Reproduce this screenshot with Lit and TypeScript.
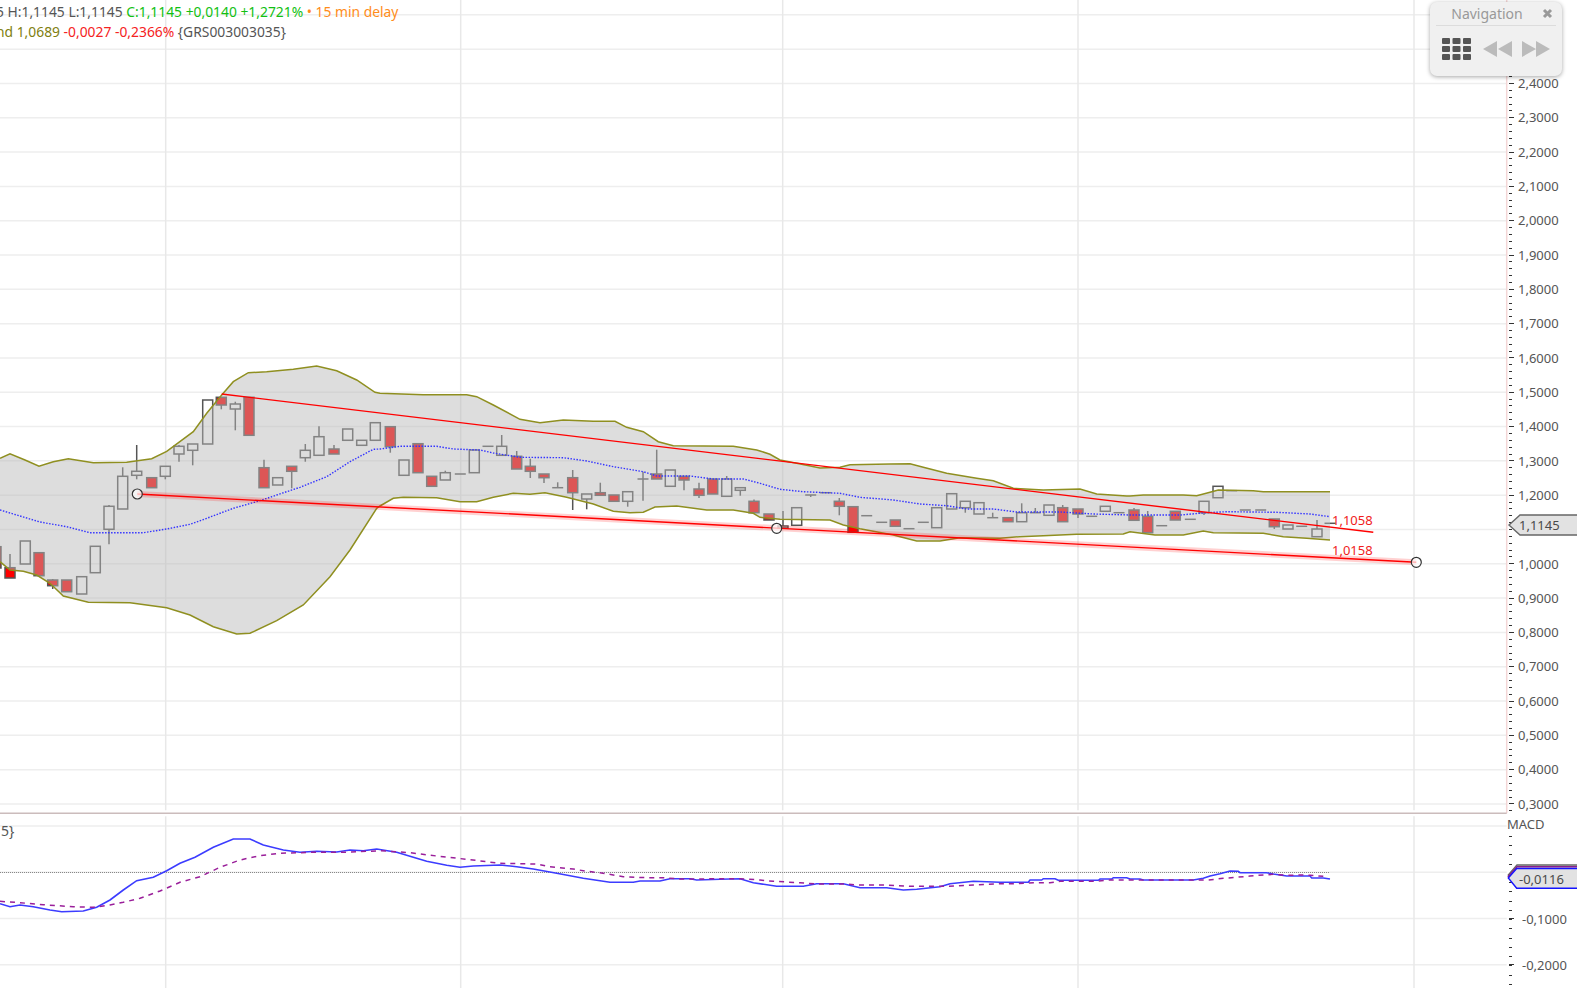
import { LitElement, html, svg, css } from "lit";
import { customElement } from "lit/decorators.js";

// price / macd scales, read off the axis
const py = (p: number) => 563.8 - (p - 1) * 343.1;
const my = (m: number) => 872.3 - m * 462;
const fmt = (v: number) => v.toFixed(4).replace(".", ",");

const GRID_X = [165.7, 460.7, 782.7, 1078, 1414];
const AXIS_X = 1506.7;
const SEP_Y = 813.3;

// points were read from 3x crops: ox,oy is the crop origin
type Pt = [number, number];
const crop = (ox: number, oy: number, s: string): Pt[] =>
  s.split(" ").map((p) => {
    const [x, y] = p.split(",").map(Number);
    return [ox + x / 3, oy + y / 3] as Pt;
  });
const line = (p: Pt[]) => p.map(([x, y]) => `${x.toFixed(1)},${y.toFixed(1)}`).join(" ");

const UPPER = [
  ...crop(0, 350, "0,325 30,311 75,330 117,349 160,335 205,326 280,338 380,337 455,326 500,304 580,245 620,190 665,135 700,95 745,68 800,65 880,58 950,48 1010,62 1070,90 1125,127"),
  ...crop(380, 380, "0,40 130,44 175,44 260,44 290,50 340,75 420,118 480,128 550,120 640,124 705,124 740,142 790,155 835,185 880,197 1060,199 1130,210"),
  ...crop(760, 440, "0,33 30,43 60,60 110,70 180,84 240,82 270,74 390,72 450,71 490,82 560,100 650,115 700,122 760,145 850,150 960,147 1010,162 1100,168"),
  ...crop(1130, 460, "0,108 40,105 160,105 200,107 240,97 265,90 370,92 400,95 600,95"),
];
const LOWER = [
  ...crop(0, 350, "0,635 30,660 70,664 110,675 150,700 190,738 265,757 390,758 500,773 570,795 640,830 710,852 750,850 830,812 910,765 990,680 1050,600 1130,475"),
  ...crop(380, 380, "0,378 40,355 70,352 170,353 240,365 290,365 340,352 400,340 450,343 495,338 560,352 640,372 700,394 750,398 790,397 825,381 890,378 980,390 1060,390 1120,400"),
  ...crop(760, 440, "0,232 60,238 210,240 250,255 300,266 400,285 470,303 540,303 600,293 720,295 780,290 850,287 950,283 1090,282"),
  ...crop(1130, 460, "0,215 75,225 160,225 220,213 250,218 400,220 460,230 530,235 600,240"),
];
const MA = [
  ...crop(0, 350, "0,480 60,498 120,516 200,530 270,548 430,548 500,537 570,523 620,505 700,475 780,452 830,435 900,412 980,380 1050,335 1120,298"),
  ...crop(380, 380, "0,207 60,199 170,199 220,207 300,210 340,219 420,232 550,233 620,243 700,260 790,275 830,288 930,288 1000,297 1090,297"),
  ...crop(760, 440, "0,130 60,148 130,155 240,160 300,172 400,180 480,192 560,197 620,207 700,207 770,216 900,216 1000,222"),
  ...crop(1130, 460, "0,165 150,165 230,158 290,155 440,157 540,162 600,170"),
];
const MACD = [
  ...crop(0, 800, "0,311 30,320 60,315 100,320 150,330 185,335 250,333 290,322 330,300 370,270 410,242 460,232 500,212 540,190 585,172 640,142 700,117 750,117 790,135 850,150 900,157 950,154 1010,156 1050,150 1090,152 1130,147 1190,157 1240,172 1280,184 1340,196 1380,202 1420,198"),
  ...crop(500, 830, "0,105 50,110 100,117 170,130 250,145 330,157 400,157 420,153 480,153 510,146 570,146 590,150 660,148 720,146 760,158 830,169 910,169 950,161 1030,161 1080,173 1160,173 1210,180 1250,178 1320,170 1350,161 1420,154"),
  ...crop(1000, 850, "0,97 85,97 90,90 125,90 130,86 165,86 175,91 295,91 300,87 335,87 340,83 380,83 390,87 420,87 430,90 580,90 610,85 630,78 660,71 690,63 715,64 720,68 800,68 820,72 860,78 930,78 935,84 970,84 990,87"),
];
const SIGNAL = [
  ...crop(0, 800, "0,304 60,308 130,314 220,320 280,322 330,315 370,307 420,295 480,273 540,247 600,230 660,202 720,180 780,167 840,160 940,157 1040,157 1140,152 1230,158 1310,168 1400,178"),
  ...crop(500, 830, "0,100 60,101 110,102 150,110 220,117 260,124 300,128 340,135 370,140 440,143 490,143 540,147 720,146 780,150 820,154 900,158 950,162 1030,162 1080,165 1160,165 1230,169 1340,169 1420,165"),
  ...crop(1000, 850, "0,101 40,101 100,98 150,98 180,94 290,94 330,90 410,90 580,90 625,90 670,85 710,82 750,78 790,75 820,73 860,76 900,75 930,76 970,79"),
];

// x, body top, body bottom, red?, wick high, wick low
type Candle = [number, number, number, number, number?, number?];
const CANDLES: Candle[] = [
  [-4, 546.7, 568, 1],
  [10, 567.7, 578, 1, 554],
  [25.3, 541, 564, 0],
  [39, 552.7, 575.7, 1],
  [52.7, 580, 585.7, 1, 579, 589],
  [66.7, 580, 591.7, 1],
  [81.7, 576.7, 594, 0],
  [95.3, 546.3, 572.7, 0],
  [109, 506.3, 529.3, 0, 505, 544.3],
  [122.7, 476.3, 509, 0, 467.3],
  [136.7, 471.3, 475.3, 0, 445, 479.3],
  [151.7, 477.7, 487.7, 1],
  [165.3, 466.3, 476.3, 0, 466, 479.3],
  [179, 446.3, 454, 0, 445, 461.7],
  [192.7, 444, 450.3, 0, 444, 465.3],
  [207.7, 400, 444, 0],
  [221.3, 397.3, 405, 1, 397, 409.3],
  [235.3, 404, 409, 0, 401.7, 430.3],
  [249, 397.3, 435.3, 1],
  [264, 467.7, 487.7, 1, 459.7],
  [277.7, 477.7, 485, 0],
  [291.7, 466.3, 471.3, 1, 466, 488.3],
  [305.3, 450.3, 457.7, 0, 444, 461.7],
  [319, 436.7, 455.3, 0, 426.3],
  [334, 449, 454, 1, 445],
  [347.7, 429, 440.3, 0],
  [361.7, 440.3, 445.3, 0],
  [375.3, 422.7, 440.3, 0],
  [390.3, 426.7, 446.7, 1, 426, 452.7],
  [404, 460, 475.3, 0],
  [418, 443.7, 472.7, 1],
  [431.7, 476.3, 486.3, 1],
  [445.3, 472.7, 480, 0, 470.7],
  [460.3, 474, 474, 0],
  [474.3, 450, 472.7, 0],
  [488, 446.3, 446.3, 0],
  [501.7, 446.3, 455.3, 0, 435],
  [516.7, 456.3, 469, 1, 451],
  [530.3, 466.3, 471.3, 1, 458.7, 478],
  [544, 474, 477.7, 1, 474, 483],
  [557.7, 487.7, 487.7, 0, 482.3],
  [572.7, 477.7, 492.7, 1, 470, 510],
  [586.7, 494, 499, 0, 494, 509.3],
  [600.3, 492.7, 495.3, 1, 482.7],
  [614, 495, 501.3, 1],
  [627.7, 491.7, 501.3, 0, 491, 506.7],
  [643, 479, 479, 0, 471.7, 500.7],
  [656.7, 474, 479, 1, 449.7],
  [670.3, 470, 486.3, 0],
  [684, 476.3, 480, 1, 476, 490.3],
  [699, 489, 495.3, 1, 482.7, 498],
  [712.7, 479, 494, 1],
  [726.7, 479, 496.3, 0, 476],
  [740.3, 487.7, 490.3, 0, 487, 495.7],
  [754, 501.3, 512.7, 1, 499.5],
  [769, 514, 520, 1],
  [783, 526, 528, 0, 511],
  [796.7, 507.7, 525.3, 0],
  [810.7, 495, 495, 0, 495, 497],
  [825.7, 492.7, 492.7, 0],
  [839.3, 501.3, 506.3, 1, 498, 515.3],
  [853, 506.7, 532.3, 1],
  [866.7, 515.7, 515.7, 0],
  [881.7, 522.3, 522.3, 0],
  [895.3, 520, 526.3, 1],
  [909, 528.7, 528.7, 0],
  [923.3, 522.3, 522.3, 0],
  [936.7, 507.7, 527.7, 0],
  [951.7, 493.7, 509, 0],
  [965.3, 501.3, 507.7, 0, 501, 512.7],
  [979, 502.7, 514, 0],
  [992.7, 517.7, 517.7, 0, 512.7],
  [1008, 517.7, 521.7, 1],
  [1021.7, 512.7, 521.7, 0, 503.3],
  [1035.3, 512.7, 512.7, 0, 508],
  [1049, 505, 515.3, 0],
  [1062.7, 507.7, 521.7, 1, 505],
  [1078, 509, 514, 1, 509, 518],
  [1091.7, 516.3, 516.3, 0],
  [1105.3, 506.3, 511.3, 0],
  [1119, 512.7, 512.7, 0],
  [1134, 510, 520.3, 1, 508],
  [1147.7, 516.3, 532.7, 1, 511],
  [1161.7, 525.7, 525.7, 0],
  [1175.3, 511.3, 520, 1],
  [1190.3, 519.3, 519.3, 0],
  [1204, 501.3, 512.7, 0, 501, 515],
  [1218, 486.3, 497.7, 0],
  [1231.7, 490.7, 490.7, 0],
  [1245.3, 510, 510, 0],
  [1260.7, 510, 510, 0],
  [1274.3, 519, 526.7, 1, 519, 529],
  [1288, 525, 529, 0],
  [1301.7, 526.3, 526.3, 0],
  [1317, 529, 536.7, 0, 520],
  [1330, 523.3, 523.3, 0],
];

const PRICES = Array.from({ length: 24 }, (_, i) => 0.3 + i * 0.1);
// 1,1000 sits under the last-price tag, 2,5000 and up under the navigation box
const PRICE_LABELS = PRICES.filter((p) => p < 2.45 && Math.abs(p - 1.1) > 0.01);

const candle = ([x, top, bottom, red, hi, lo]: Candle) => {
  // wicks stop at the body, hollow candles stay empty inside
  const wicks = svg`
    <line class="wick" x1=${x} x2=${x} y1=${hi ?? top} y2=${top}></line>
    <line class="wick" x1=${x} x2=${x} y1=${bottom} y2=${lo ?? bottom}></line>`;
  if (top === bottom) {
    return svg`${wicks}<line class="wick" x1=${x - 5.5} x2=${x + 5.5} y1=${top} y2=${top}></line>`;
  }
  return svg`${wicks}<rect class=${red ? "body red" : "body"} x=${x - 5} y=${top} width="10" height=${bottom - top}></rect>`;
};

@customElement("app-root")
export class AppRoot extends LitElement {
  static styles = css`
    :host {
      display: block;
      position: relative;
      width: 1577px;
      height: 988px;
      overflow: hidden;
      background: #fff;
      font-family: "Noto Sans", "Open Sans", sans-serif;
      font-size: 14px;
      color: #555;
    }
    svg.chart {
      display: block;
    }
    svg text {
      font-family: "Noto Sans", "Open Sans", sans-serif;
      font-size: 13px;
      fill: #555;
    }
    svg text.trend {
      fill: #f01c1c;
    }
    svg text.tag {
      fill: #4a4a4a;
    }
    .grid {
      stroke: #eeeeee;
      stroke-width: 1.5;
    }
    .vgrid {
      stroke: #e8e8e8;
      stroke-width: 1.5;
    }
    .zero {
      stroke: #888;
      stroke-width: 1;
      stroke-dasharray: 1 1;
      shape-rendering: crispEdges;
    }
    .sep {
      stroke: #cbbcbc;
      stroke-width: 1.5;
    }
    .axis {
      stroke: #f3d6d6;
      stroke-width: 1.5;
    }
    .tick {
      stroke: #333;
      stroke-width: 1;
      shape-rendering: crispEdges;
    }
    .wick {
      stroke: #555;
      stroke-width: 1.5;
    }
    .body {
      fill: none;
      stroke: #555;
      stroke-width: 1.5;
    }
    .body.red {
      fill: #f00;
    }
    .band {
      fill: rgba(182, 182, 182, 0.47);
    }
    .boll {
      fill: none;
      stroke: #8f8f20;
      stroke-width: 1.5;
    }
    .ma {
      fill: none;
      stroke: #3434ff;
      stroke-width: 1.4;
      stroke-dasharray: 1.5 1.5;
    }
    .trendline {
      stroke: #f00;
      stroke-width: 1.4;
    }
    .halo {
      stroke: rgba(255, 0, 0, 0.18);
      stroke-width: 6;
    }
    .handle {
      fill: rgba(255, 255, 255, 0.7);
      stroke: #333;
      stroke-width: 1.2;
    }
    .macd {
      fill: none;
      stroke: #3c3cff;
      stroke-width: 1.6;
    }
    .signal {
      fill: none;
      stroke: #9a1f9a;
      stroke-width: 1.5;
      stroke-dasharray: 5 5;
    }
    .tagbox {
      fill: #e2e2e2;
      stroke: #666;
      stroke-width: 1.4;
    }
    .tagbox.purple {
      stroke: #8a1f8a;
    }
    .tagbox.blue {
      stroke: #1414ff;
    }

    .legend {
      position: absolute;
      left: 0;
      top: 0;
      white-space: nowrap;
      font-size: 13.85px;
      line-height: 20px;
      padding-top: 2px;
    }
    .row1,
    .row2 {
      margin-left: -4px;
    }
    .green {
      color: #12bf12;
    }
    .orange {
      color: #ff8c1a;
    }
    .olive {
      color: #808010;
    }
    .down {
      color: #f52222;
    }
    .study {
      position: absolute;
      left: 1px;
      top: 821px;
      line-height: 20px;
    }

    .nav {
      position: absolute;
      left: 1430px;
      top: 2px;
      width: 132px;
      height: 74px;
      box-sizing: border-box;
      padding: 0 6px;
      background: #f0f0f0;
      border-radius: 7px;
      box-shadow: 0 1px 4px rgba(0, 0, 0, 0.35);
    }
    .nav-head {
      display: flex;
      align-items: center;
      height: 23px;
      border-bottom: 1px solid #dcdcdc;
      color: #999;
      font-size: 14px;
    }
    .nav-title {
      flex: 1;
      text-align: center;
      padding-right: 4px;
    }
    .nav-close {
      display: block;
      margin-right: 3px;
    }
    .nav-body {
      display: flex;
      align-items: center;
      padding: 12px 0 0 6px;
    }
    .nav-body svg {
      display: block;
    }
    .grid-icon {
      margin-right: 12px;
    }
    .step {
      margin-right: 10px;
    }
  `;

  render() {
    const minors: number[] = [];
    for (let i = 0; i < 118; i++) minors.push(py(0.28) - i * 6.862);
    const subTicks: number[] = [];
    for (let y = 836.5; y < 988; y += 9.24) subTicks.push(y);

    return html`
      <svg class="chart" width="1577" height="988" viewBox="0 0 1577 988">
        ${PRICES.map((p) => svg`<line class="grid" x1="0" x2=${AXIS_X} y1=${py(p)} y2=${py(p)}></line>`)}
        ${[0.1, 0, -0.1, -0.2].map((m) => svg`<line class="grid" x1="0" x2=${AXIS_X} y1=${my(m)} y2=${my(m)}></line>`)}
        ${GRID_X.map(
          (x) => svg`
            <line class="vgrid" x1=${x} x2=${x} y1="0" y2=${SEP_Y - 3}></line>
            <line class="vgrid" x1=${x} x2=${x} y1=${SEP_Y + 3} y2="988"></line>`,
        )}

        ${CANDLES.map(candle)}
        <polygon class="band" points=${line([...UPPER, ...[...LOWER].reverse()])}></polygon>
        <polyline class="boll" points=${line(UPPER)}></polyline>
        <polyline class="boll" points=${line(LOWER)}></polyline>
        <polyline class="ma" points=${line(MA)}></polyline>

        <line class="trendline" x1="221.7" y1="394" x2="1373.3" y2="532.3"></line>
        <line class="halo" x1="137.3" y1="494" x2="1416.3" y2="562.3"></line>
        <line class="trendline" x1="137.3" y1="494" x2="1416.3" y2="562.3"></line>
        <circle class="handle" cx="137.3" cy="494" r="5"></circle>
        <circle class="handle" cx="776.7" cy="528.3" r="5"></circle>
        <circle class="handle" cx="1416.3" cy="562.3" r="5"></circle>
        <text class="trend" x="1332" y="525">1,1058</text>
        <text class="trend" x="1332" y="555">1,0158</text>

        <line class="axis" x1=${AXIS_X} x2=${AXIS_X} y1="0" y2=${SEP_Y}></line>
        <line class="sep" x1="0" x2=${AXIS_X} y1=${SEP_Y} y2=${SEP_Y}></line>
        ${minors.map((y) => svg`<line class="tick" x1="1508.7" x2="1511.7" y1=${y} y2=${y}></line>`)}
        ${PRICE_LABELS.map(
          (p) => svg`
            <line class="tick" x1="1508.7" x2="1514" y1=${py(p)} y2=${py(p)}></line>
            <text x="1518" y=${py(p) + 4.7}>${fmt(p)}</text>`,
        )}

        <polygon class="tagbox" points="1509,525 1520,515 1578,515 1578,535 1520,535"></polygon>
        <text class="tag" x="1519" y="530">1,1145</text>

        <line class="zero" x1="0" x2="1330" y1=${my(0)} y2=${my(0)}></line>
        <polyline class="macd" points=${line(MACD)}></polyline>
        <polyline class="signal" points=${line(SIGNAL)}></polyline>

        ${subTicks.map((y) => svg`<line class="tick" x1="1508.7" x2="1511.7" y1=${y} y2=${y}></line>`)}
        ${[-0.1, -0.2].map(
          (m) => svg`
            <line class="tick" x1="1508.7" x2="1514" y1=${my(m)} y2=${my(m)}></line>
            <text x="1522" y=${my(m) + 5.5}>${fmt(m)}</text>`,
        )}
        <text x="1507" y="829">MACD</text>
        <polygon class="tagbox" points="1508.3,875 1517,865 1578,865 1578,887 1517,887"></polygon>
        <polygon class="tagbox purple" points="1508.3,876.5 1517,866.8 1578,866.8 1578,888 1517,888"></polygon>
        <polygon class="tagbox blue" points="1508.3,878 1516.7,868.5 1578,868.5 1578,888.3 1516.7,888.3"></polygon>
        <text class="tag" x="1519" y="883.5">${fmt(-0.0116)}</text>
      </svg>

      <div class="legend">
        <div class="row1">
          5 H:1,1145 L:1,1145
          <span class="green">C:1,1145 +0,0140 +1,2721%</span>
          <span class="orange">• 15 min delay</span>
        </div>
        <div class="row2">
          <span class="olive">nd 1,0689</span>
          <span class="down">-0,0027 -0,2366%</span>
          {GRS003003035}
        </div>
      </div>
      <div class="study">5}</div>

      <div class="nav">
        <div class="nav-head">
          <span class="nav-title">Navigation</span>
          <svg class="nav-close" width="11" height="11" viewBox="0 0 11 11">
            <path d="M2 2 9 9M9 2 2 9" stroke="#999" stroke-width="3"></path>
          </svg>
        </div>
        <div class="nav-body">
          <svg class="grid-icon" width="29" height="22" viewBox="0 0 29 22" fill="#555">
            ${[0, 8, 16].map((y) =>
              [0, 10.5, 21].map((x) => svg`<rect x=${x} y=${y} width="8" height="6" rx="1"></rect>`),
            )}
          </svg>
          <svg class="step" width="29" height="16" viewBox="0 0 29 16" fill="#bbb">
            <path d="M14 0V16L0 8ZM29 0V16L15 8Z"></path>
          </svg>
          <svg width="28" height="16" viewBox="0 0 28 16" fill="#bbb">
            <path d="M0 0 14 8 0 16ZM14 0 28 8 14 16Z"></path>
          </svg>
        </div>
      </div>
    `;
  }
}
